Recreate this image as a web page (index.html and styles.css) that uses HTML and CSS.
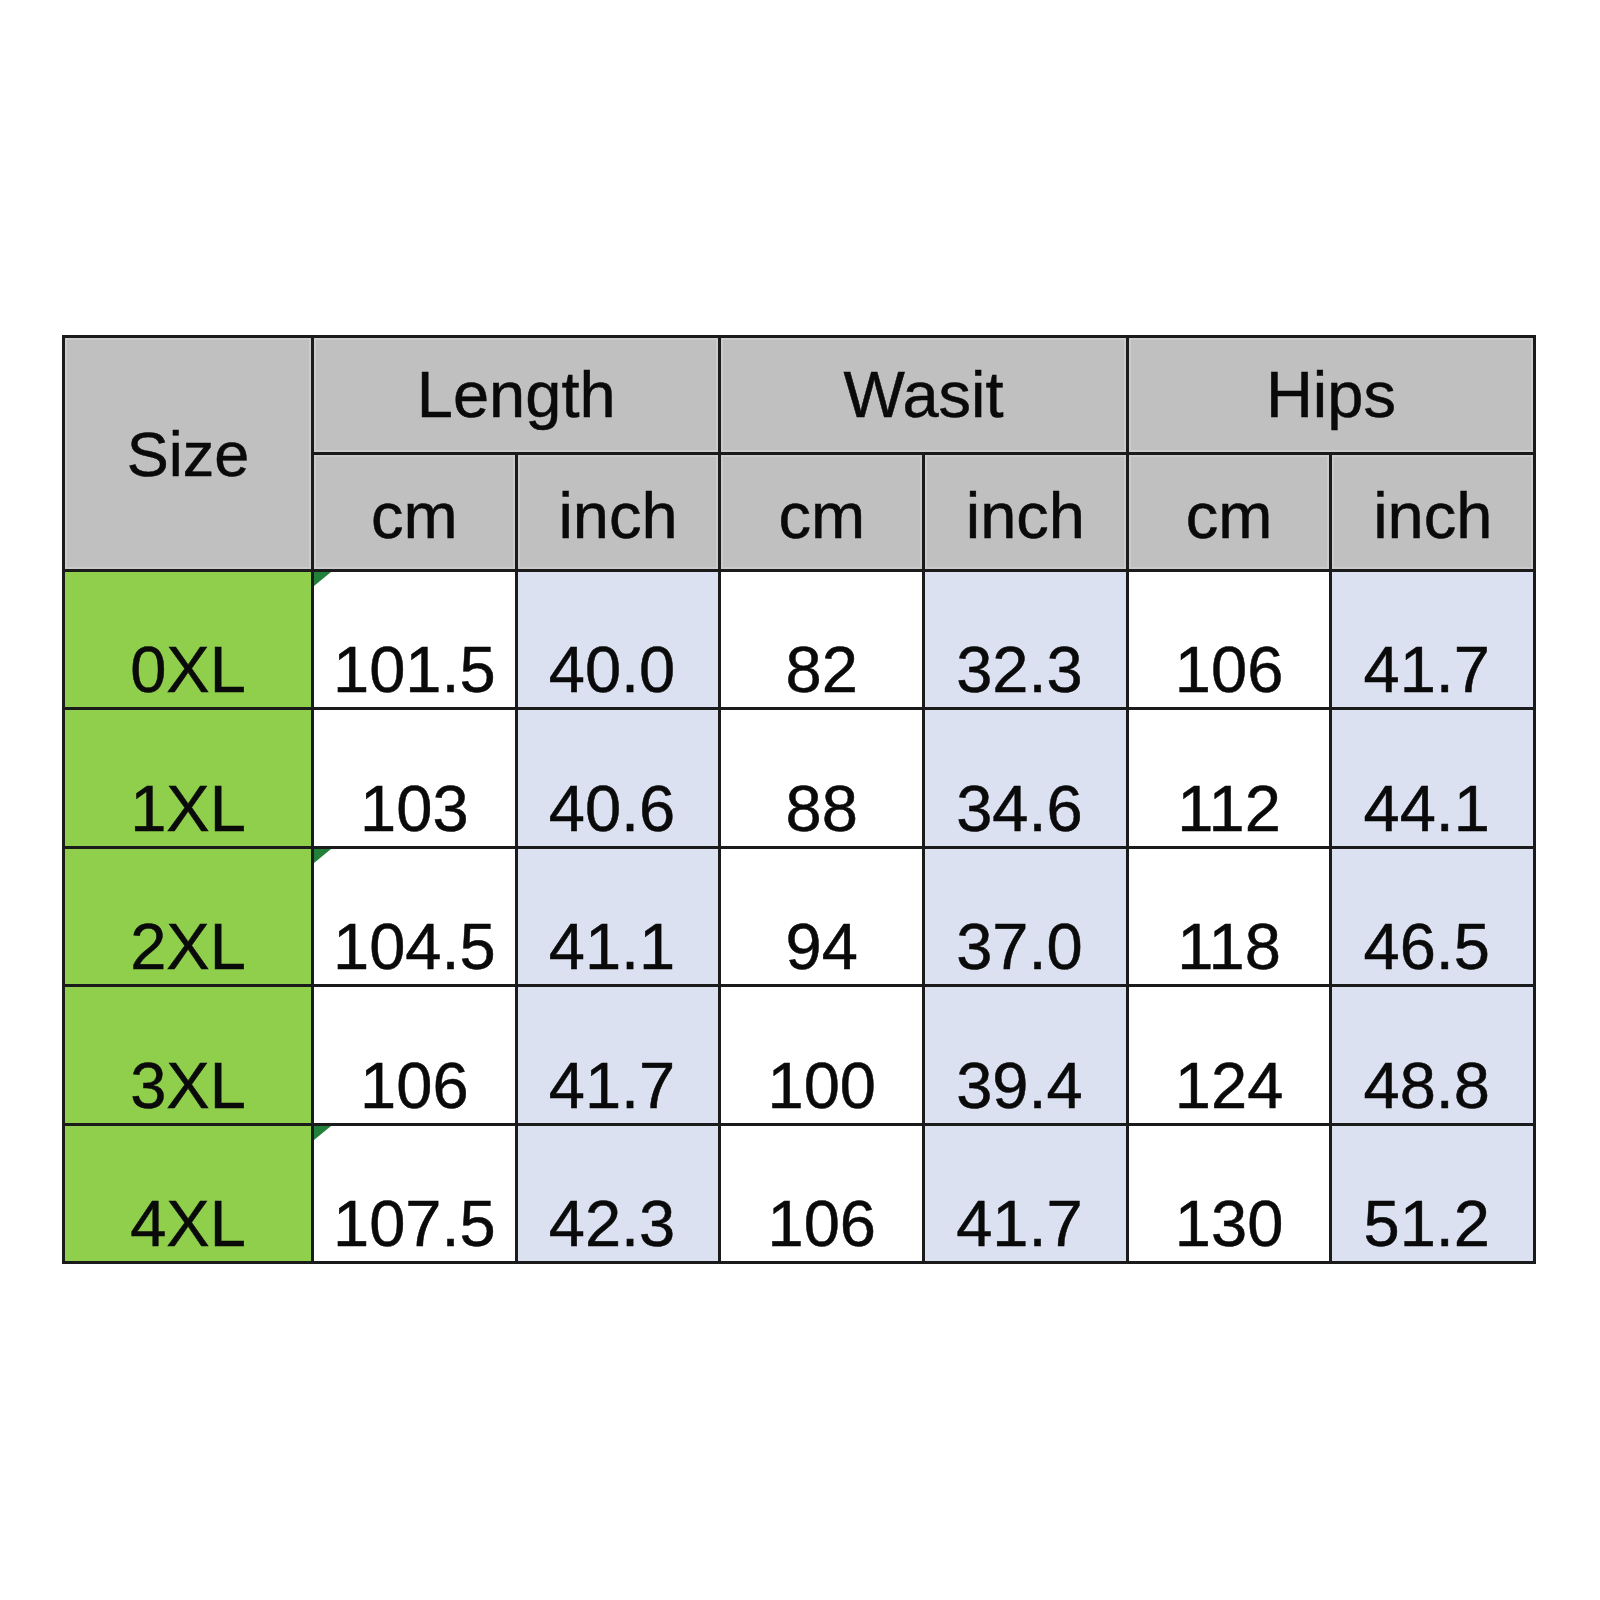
FILE: index.html
```html
<!DOCTYPE html>
<html>
<head>
<meta charset="utf-8">
<link rel="stylesheet" href="styles.css">
</head>
<body>
<div class="chart">
  <div class="cell head size">Size</div>
  <div class="cell head group">Length</div>
  <div class="cell head group">Wasit</div>
  <div class="cell head group">Hips</div>
  <div class="cell head unit">cm</div>
  <div class="cell head unit">inch</div>
  <div class="cell head unit">cm</div>
  <div class="cell head unit">inch</div>
  <div class="cell head unit">cm</div>
  <div class="cell head unit">inch</div>

  <div class="cell label">0XL</div>
  <div class="cell cm flag">101.5</div>
  <div class="cell inch">40.0</div>
  <div class="cell cm">82</div>
  <div class="cell inch">32.3</div>
  <div class="cell cm">106</div>
  <div class="cell inch">41.7</div>

  <div class="cell label">1XL</div>
  <div class="cell cm">103</div>
  <div class="cell inch">40.6</div>
  <div class="cell cm">88</div>
  <div class="cell inch">34.6</div>
  <div class="cell cm">112</div>
  <div class="cell inch">44.1</div>

  <div class="cell label">2XL</div>
  <div class="cell cm flag">104.5</div>
  <div class="cell inch">41.1</div>
  <div class="cell cm">94</div>
  <div class="cell inch">37.0</div>
  <div class="cell cm">118</div>
  <div class="cell inch">46.5</div>

  <div class="cell label">3XL</div>
  <div class="cell cm">106</div>
  <div class="cell inch">41.7</div>
  <div class="cell cm">100</div>
  <div class="cell inch">39.4</div>
  <div class="cell cm">124</div>
  <div class="cell inch">48.8</div>

  <div class="cell label">4XL</div>
  <div class="cell cm flag">107.5</div>
  <div class="cell inch">42.3</div>
  <div class="cell cm">106</div>
  <div class="cell inch">41.7</div>
  <div class="cell cm">130</div>
  <div class="cell inch">51.2</div>
</div>
</body>
</html>
```
FILE: styles.css
```css
html, body {
  margin: 0;
  padding: 0;
  background: #ffffff;
}

body {
  width: 1600px;
  height: 1600px;
  padding: 335px 0 0 62px;
  box-sizing: border-box;
  font-family: "Liberation Sans", Arial, sans-serif;
  color: #0a0a0a;
}

.chart {
  display: grid;
  width: max-content;
  grid-template-columns: 246px repeat(6, 200.7px);
  grid-template-rows: 114px 114px repeat(5, 135.4px);
  gap: 3px;
  padding: 3px;
  background: #1b1b1b;
}

.cell {
  display: flex;
  justify-content: center;
  align-items: flex-end;
  font-size: 65px;
  line-height: 64px;
  padding-bottom: 5px;
  box-sizing: border-box;
  position: relative;
  -webkit-text-stroke: 0.5px #0a0a0a;
}

.head {
  background: #c0c0c0;
  align-items: center;
  padding-bottom: 0;
  box-shadow: inset 0 0 0 2px #cbcbcb;
}

.size {
  grid-row: span 2;
  font-size: 63px;
  line-height: 62px;
}

.group {
  grid-column: span 2;
}

.unit {
  padding-top: 8px;
}

.label {
  background: #8fcf4c;
}

.cm {
  background: #ffffff;
}

.inch {
  background: #dbe1f1;
  padding-right: 12px;
}

.flag::before {
  content: "";
  position: absolute;
  top: 0;
  left: 0;
  width: 0;
  height: 0;
  border-top: 14px solid #23803a;
  border-right: 17px solid transparent;
}
```
